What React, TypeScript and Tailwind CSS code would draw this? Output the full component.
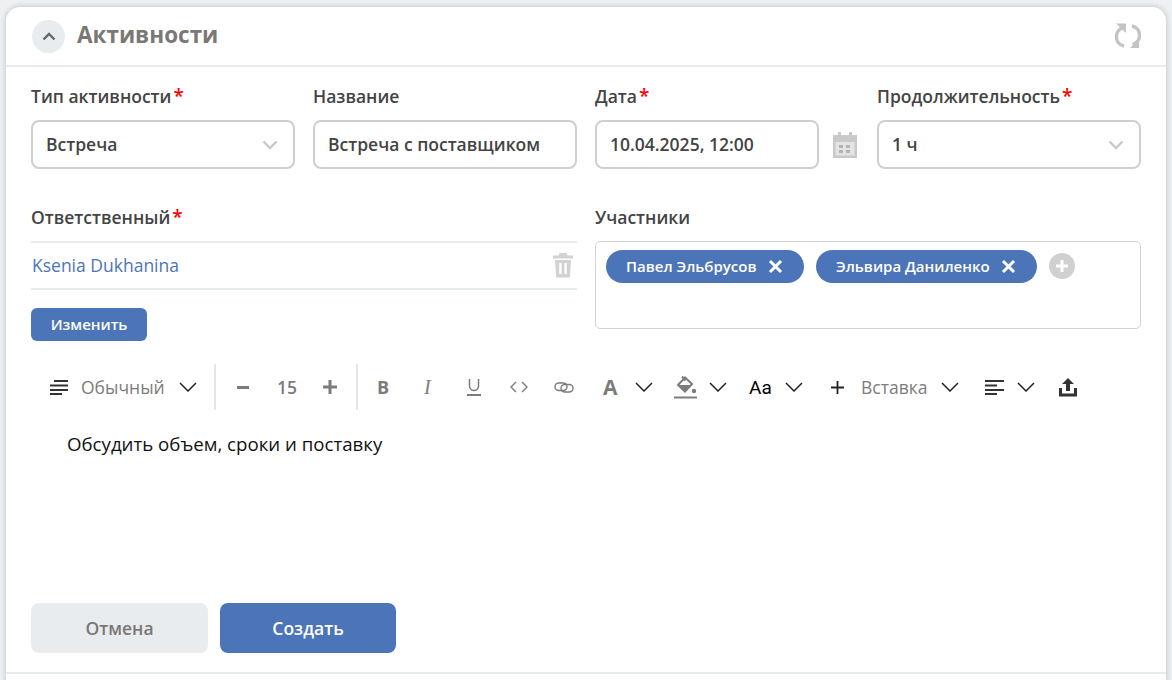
import React from "react";

const font = { fontFamily: '"Open Sans", "Noto Sans", sans-serif' };

const Chevron = () => {
  return (
    <svg width="18" height="10" viewBox="0 0 18 10" fill="none" stroke="#222" strokeWidth="1.500" className="shrink-0">
      <path d="M1 1l8 8 8-8" />
    </svg>
  );
};

const SelectChevron = () => {
  return (
    <svg width="16" height="10" viewBox="0 0 16 10" fill="none" stroke="#c9c9c9" strokeWidth="2.400">
      <path d="M1.500 1.500 8 8l6.500-6.500" />
    </svg>
  );
};

const Required = () => <span className="text-[#f00] ml-[2px] text-[19px] leading-none font-semibold">*</span>;

const Label = ({ children, required }: { children: React.ReactNode; required?: boolean }) => {
  return (
    <div className="h-[24px] pb-[2px] flex items-center text-[17.5px] font-semibold text-[#444444] whitespace-nowrap">
      {children}
      {required && <Required />}
    </div>
  );
};

const Field = ({ value, chevron }: { value: string; chevron?: boolean }) => {
  return (
    <div className="h-[49px] flex-1 border-2 border-[#cfcfcf] rounded-[8px] bg-white pl-[13px] pr-[15px] flex items-center justify-between text-[17.5px] font-semibold text-[#444444] whitespace-nowrap">
      <span>{value}</span>
      {chevron && <SelectChevron />}
    </div>
  );
};

const Chip = ({ name, width }: { name: string; width: string }) => {
  return (
    <div className={`h-[33px] rounded-full bg-[#4c74b9] text-white flex items-center justify-between pl-[20px] pr-[21px] text-[15px] font-semibold whitespace-nowrap ${width}`}>
      <span>{name}</span>
      <svg width="15" height="15" viewBox="0 0 15 15" stroke="currentColor" strokeWidth="3" className="-mt-[1px]">
        <path d="M2 2l11 11M13 2 2 13" />
      </svg>
    </div>
  );
};

const LinesIcon = ({ short }: { short?: boolean }) => {
  return (
    <svg width="20" height="16" viewBox="0 0 20 16" stroke="#333" strokeWidth="2" className="shrink-0">
      <path d={short ? "M1 2h19M1 6.500h12M1 11h19M1 15h12" : "M5 2h14M1 6.500h18M1 11h18M1 15h12"} />
    </svg>
  );
};

export default function App() {
  return (
    <div style={font} className="w-[1172px] h-[680px] bg-[#eef1f3] pt-[7px] px-[6px] overflow-hidden">
      <div className="h-[700px] bg-white rounded-t-[14px] shadow-[0_0_6px_rgba(0,0,0,0.22)]">
        <div className="h-[667px] flex flex-col border-b-2 border-[#e8ecef]">
          <div className="h-[60px] shrink-0 border-b-2 border-[#e8ecef] flex items-center justify-between pl-[26px] pr-[25px]">
            <div className="flex items-center gap-[12px]">
              <div className="w-[33px] h-[33px] rounded-full bg-[#e8ecef] flex items-center justify-center">
                <svg width="14" height="9" viewBox="0 0 14 9" fill="none" stroke="#666" strokeWidth="2.400">
                  <path d="M1.500 7.500 7 2l5.500 5.500" />
                </svg>
              </div>
              <span className="text-[22.5px] font-bold text-[#7a7875] leading-none -mt-[1px]">Активности</span>
            </div>
            <svg width="26" height="26" viewBox="0 0 26 26" fill="none" stroke="#c4c4c4" strokeWidth="3.500" className="-mt-[1px] -ml-[1px]">
              <path d="M8.500 4.500A9.500 9.500 0 0 0 9 23" />
              <path d="M17.500 21.500A9.500 9.500 0 0 0 17 3" />
              <path d="M1 0.500h10v9.500z" fill="#c4c4c4" stroke="none" />
              <path d="M24 25h-9l9-9z" fill="#c4c4c4" stroke="none" />
            </svg>
          </div>

          <div className="px-[25px] pt-[18px] flex flex-col flex-1">
            <div className="grid grid-cols-4 gap-x-[18px]">
              <div className="flex flex-col gap-[11px]">
                <Label required>Тип активности</Label>
                <Field value="Встреча" chevron />
              </div>
              <div className="flex flex-col gap-[11px]">
                <Label>Название</Label>
                <Field value="Встреча с поставщиком" />
              </div>
              <div className="flex flex-col gap-[11px]">
                <Label required>Дата</Label>
                <div className="flex items-center gap-[13px]">
                  <div className="w-[224px] flex">
                    <Field value="10.04.2025, 12:00" />
                  </div>
                  <svg width="26" height="26" viewBox="0 0 26 26" fill="#c9c9c9">
                    <rect x="6" y="0" width="3" height="5" />
                    <rect x="17" y="0" width="3" height="5" />
                    <path d="M1 3h24v23H1z" />
                    <path d="M3.500 10h19v13.500h-19z" fill="#e4e4e4" />
                    <path d="M7 13h4v3H7zM14 13h4v3h-4zM7 18h4v3H7zM14 18h4v3h-4z" fill="#b4b4b4" />
                  </svg>
                </div>
              </div>
              <div className="flex flex-col gap-[11px]">
                <Label required>Продолжительность</Label>
                <Field value="1 ч" chevron />
              </div>
            </div>

            <div className="grid grid-cols-2 gap-x-[18px] mt-[37px]">
              <div>
                <Label required>Ответственный</Label>
                <div className="mt-[11px] h-[49px] border-y-2 border-[#e8ecef] flex items-center justify-between pl-[1px] pr-[4px]">
                  <span className="text-[17.5px] text-[#4c74b9]">Ksenia Dukhanina</span>
                  <svg width="20" height="25" viewBox="0 0 20 25" fill="#d2d2d2">
                    <path d="M6.500 0h7l1 2.500H20v3H0v-3h5.500z" />
                    <path d="M2 7h16l-1.200 17.500H3.200zM6.200 10v11h2.400V10zm5.200 0v11h2.400V10z" fillRule="evenodd" />
                  </svg>
                </div>
                <button className="mt-[18px] w-[116px] h-[33px] rounded-[6px] bg-[#4c74b9] text-white text-[15px] font-semibold flex items-center justify-center">
                  Изменить
                </button>
              </div>
              <div>
                <Label>Участники</Label>
                <div className="mt-[11px] h-[88px] border border-[#d2d2d2] rounded-[5px] px-[10px] pt-[8px] flex items-start gap-[12px]">
                  <Chip name="Павел Эльбрусов" width="w-[198px]" />
                  <Chip name="Эльвира Даниленко" width="w-[221px]" />
                  <div className="w-[26px] h-[26px] mt-[3px] rounded-full bg-[#d0d0d0] flex items-center justify-center">
                    <svg width="14" height="14" viewBox="0 0 14 14" stroke="white" strokeWidth="3">
                      <path d="M7 1v12M1 7h12" />
                    </svg>
                  </div>
                </div>
              </div>
            </div>

            <div className="h-[46px] mt-[23px] flex items-center text-[#7c7c7c] whitespace-nowrap">
              <div className="ml-[18px] flex"><LinesIcon /></div>
              <span className="ml-[12px] w-[84px] text-[17.5px]">Обычный</span>
              <div className="ml-[14px] flex"><Chevron /></div>
              <div className="ml-[17px] w-[2px] h-[46px] bg-[#e6e6e6]" />
              <span className="ml-[21px] w-[12px] h-[3px] bg-[#7c7c7c]" />
              <span className="ml-[28px] w-[20px] text-[17.5px] font-semibold text-center">15</span>
              <svg className="ml-[26px]" width="14" height="14" viewBox="0 0 14 14" stroke="#7c7c7c" strokeWidth="3"><path d="M7 0v14M0 7h14" /></svg>
              <div className="ml-[19px] w-[2px] h-[46px] bg-[#e6e6e6]" />
              <span className="ml-[19px] w-[13px] text-[18px] font-bold leading-none">B</span>
              <span className="ml-[34px] w-[10px] font-['Liberation_Serif'] italic text-[20px] leading-none">I</span>
              <div className="ml-[33px] flex flex-col items-center w-[14px]">
                <svg width="12" height="13" viewBox="0 0 12 13" fill="none" stroke="#7c7c7c" strokeWidth="1.500"><path d="M1.500 0v7a4.500 4.500 0 0 0 9 0V0" /></svg>
                <span className="mt-[2px] w-[14px] h-[2px] bg-[#7c7c7c]" />
              </div>
              <svg className="ml-[29px]" width="18" height="12" viewBox="0 0 18 12" fill="none" stroke="#7c7c7c" strokeWidth="1.400"><path d="M6 1 1 6l5 5M12 1l5 5-5 5" /></svg>
              <svg className="ml-[26px]" width="20" height="11" viewBox="0 0 20 11" fill="none" stroke="#7c7c7c" strokeWidth="1.400">
                <rect x="1" y="1" width="12" height="7.500" rx="3.750" />
                <rect x="7" y="2.500" width="12" height="7.500" rx="3.750" />
              </svg>
              <span className="ml-[29px] w-[16px] text-[21px] font-bold leading-none">A</span>
              <div className="ml-[16px] flex"><Chevron /></div>
              <svg className="ml-[21px]" width="24" height="23" viewBox="0 0 24 23" fill="none" stroke="#7c7c7c" strokeWidth="2">
                <path d="M11 1.500 4 9l7 6.500 7-7.500z" />
                <path d="M8 0.500l3.500 4" />
                <path d="M4 9h14l-7 6.500z" fill="#7c7c7c" stroke="none" />
                <circle cx="20" cy="15" r="2.200" fill="#7c7c7c" stroke="none" />
                <path d="M0 21.500h23" />
              </svg>
              <div className="ml-[11px] flex"><Chevron /></div>
              <span className="ml-[22px] w-[22px] text-[19px] text-black leading-none" style={{ fontFamily: "Roboto, sans-serif" }}>Aa</span>
              <div className="ml-[14px] flex"><Chevron /></div>
              <svg className="ml-[28px]" width="13" height="13" viewBox="0 0 13 13" stroke="#222" strokeWidth="1.800"><path d="M6.500 0v13M0 6.500h13" /></svg>
              <span className="ml-[17px] w-[65px] text-[17.5px]">Вставка</span>
              <div className="ml-[15px] flex"><Chevron /></div>
              <div className="ml-[25px] flex"><LinesIcon short /></div>
              <div className="ml-[13px] flex"><Chevron /></div>
              <svg className="ml-[23px]" width="20" height="19" viewBox="0 0 20 19" fill="#333">
                <path d="M10 0l6 6h-4v7H8V6H4z" />
                <path d="M1 10h3v5.500h12V10h3v8.500H1z" />
              </svg>
            </div>

            <div className="mt-[21px] pl-[36px] text-[18.67px] text-[#111] leading-[26px]">Обсудить объем, сроки и поставку</div>

            <div className="mt-auto mb-[19px] flex gap-[12px]">
              <button className="w-[177px] h-[50px] rounded-[8px] bg-[#e8ecef] text-[#7a7875] text-[17.5px] font-semibold">Отмена</button>
              <button className="w-[176px] h-[50px] rounded-[8px] bg-[#4c74b9] text-white text-[17.5px] font-semibold">Создать</button>
            </div>
          </div>
        </div>
      </div>
    </div>
  );
}
